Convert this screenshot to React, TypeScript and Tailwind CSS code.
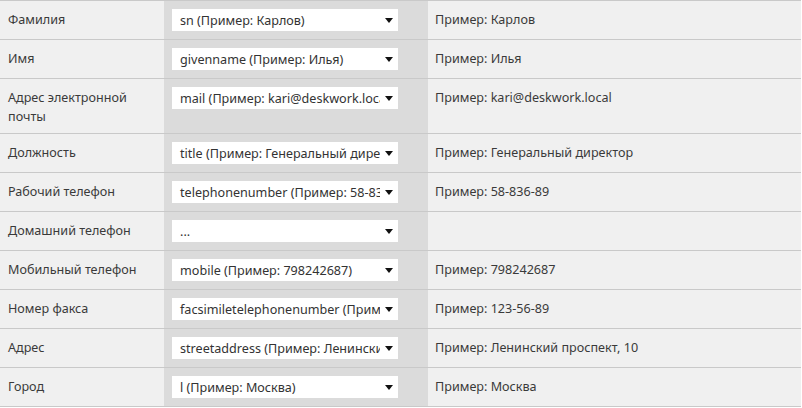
import React from 'react'

type Row = { label: string; field: string; example?: string }

const ROWS: Row[] = [
  { label: 'Фамилия', field: 'sn (Пример: Карлов)', example: 'Пример: Карлов' },
  { label: 'Имя', field: 'givenname (Пример: Илья)', example: 'Пример: Илья' },
  { label: 'Адрес электронной почты', field: 'mail (Пример: kari@deskwork.local)', example: 'Пример: kari@deskwork.local' },
  { label: 'Должность', field: 'title (Пример: Генеральный директор)', example: 'Пример: Генеральный директор' },
  { label: 'Рабочий телефон', field: 'telephonenumber (Пример: 58-836-89)', example: 'Пример: 58-836-89' },
  { label: 'Домашний телефон', field: '...' },
  { label: 'Мобильный телефон', field: 'mobile (Пример: 798242687)', example: 'Пример: 798242687' },
  { label: 'Номер факса', field: 'facsimiletelephonenumber (Пример: 123-56-89)', example: 'Пример: 123-56-89' },
  { label: 'Адрес', field: 'streetaddress (Пример: Ленинский проспект, 10)', example: 'Пример: Ленинский проспект, 10' },
  { label: 'Город', field: 'l (Пример: Москва)', example: 'Пример: Москва' },
]

// Псевдо-select: текст обрезается без многоточия, как у нативного
const FakeSelect: React.FC<{ value: string }> = ({ value }) => (
  <div className="flex h-[22px] w-[226px] items-center bg-white">
    <span className="flex-1 overflow-hidden whitespace-nowrap pl-2 text-[#333]">{value}</span>
    <span className="flex w-[18px] shrink-0 justify-center">
      <svg width="8" height="5" viewBox="0 0 8 5">
        <path d="M0 0H8L4 5Z" fill="#111" />
      </svg>
    </span>
  </div>
)

export default function App() {
  return (
    <div className="min-h-[408px] w-[802px] bg-white" style={{ fontFamily: '"Noto Sans", "Open Sans", sans-serif' }}>
      <div className="w-[801px] border-t border-[#c9c9c9] text-[12.6px] leading-[19px] text-[#3a3a3a]">
        {ROWS.map((r, i) => (
          <div key={i} className="grid grid-cols-[164px_264px_373px] border-b border-[#c9c9c9]">
            <div className="bg-[#f0f0f0] px-2 pt-[9px] pb-[7px]">{r.label}</div>
            <div className="bg-[#dbdbdb] py-2 pl-2">
              <FakeSelect value={r.field} />
            </div>
            <div className="bg-[#f0f0f0] pl-[7px] pr-2 pt-[9px] pb-[7px]">{r.example ?? ''}</div>
          </div>
        ))}
      </div>
    </div>
  )
}
